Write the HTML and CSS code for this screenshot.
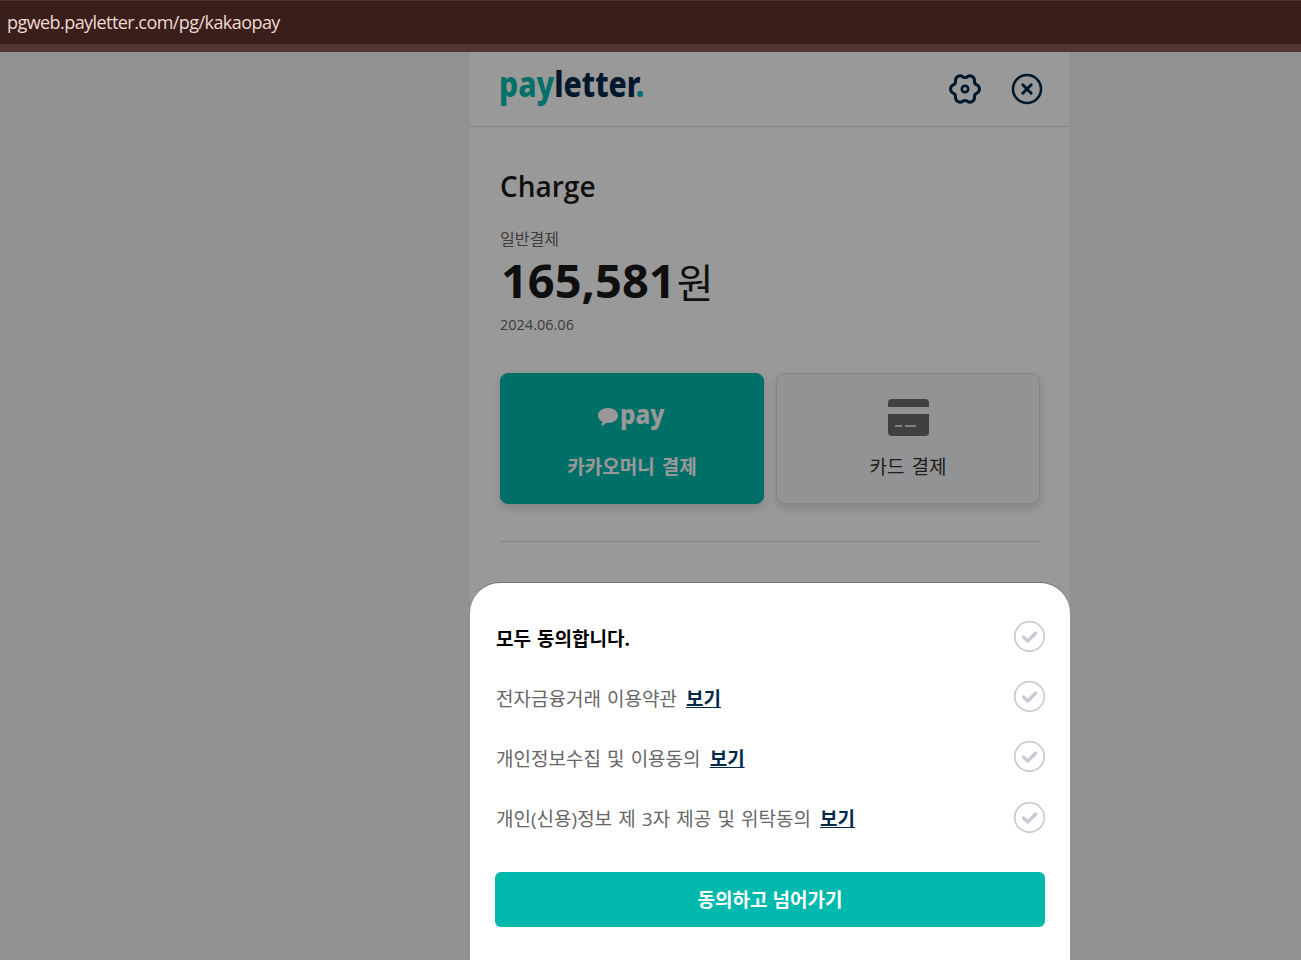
FILE: index.html
```html
<!doctype html>
<html lang="ko">
<head>
	<meta charset="UTF-8">
	<title>payletter</title>
	<link rel="stylesheet" href="styles.css">
</head>
<body>
	<div class="urlbar">
		<div class="urltext">pgweb.payletter.com/pg/kakaopay</div>
	</div>
	<div class="page">
		<div class="panel">
			<div class="header">
				<div class="logo"><span class="logo-pay">pay</span>letter<span class="logo-pay">.</span></div>
				<div class="header-icons">
					<svg class="icon-gear" width="34" height="34" viewBox="0 0 34 34" fill="none" stroke="#00294a" stroke-width="3" stroke-linejoin="round">
						<path d="M28.81 12.9A4.5 4.5 0 0 1 28.81 21.1A4 4 0 0 0 26.46 25.18A4.5 4.5 0 0 1 19.36 29.28A4 4 0 0 0 14.64 29.28A4.5 4.5 0 0 1 7.54 25.18A4 4 0 0 0 5.19 21.1A4.5 4.5 0 0 1 5.19 12.9A4 4 0 0 0 7.54 8.82A4.5 4.5 0 0 1 14.64 4.72A4 4 0 0 0 19.36 4.72A4.5 4.5 0 0 1 26.46 8.82A4 4 0 0 0 28.81 12.9z"/>
						<circle cx="17" cy="17" r="3.200" stroke-width="2.600"/>
					</svg>
					<svg class="icon-close" width="32" height="32" viewBox="0 0 32 32" fill="none" stroke="#00294a" stroke-width="2.600" stroke-linecap="round">
						<circle cx="16" cy="16" r="14"/>
						<path stroke-width="3" d="M11.800 11.800l8.400 8.400M20.200 11.800l-8.400 8.400"/>
					</svg>
				</div>
			</div>
			<div class="content">
				<h1 class="title">Charge</h1>
				<div class="label">일반결제</div>
				<div class="amount"><span class="amount-num">165,581</span><span class="amount-unit">원</span></div>
				<div class="date">2024.06.06</div>
				<div class="methods">
					<div class="method method-on">
						<div class="kakao">
							<svg class="kakao-bubble" width="22" height="21" viewBox="0 0 22 21"><path fill="#fff" d="M11 1C5.400 1 1 4.300 1 8.500c0 2.700 1.800 5 4.500 6.300l-1.100 4.700 5-3.600c.5.100 1.100.1 1.600.1 5.600 0 10-3.300 10-7.500S16.600 1 11 1z"/></svg>
							<span class="kakao-pay">pay</span>
						</div>
						<div class="method-name">카카오머니 결제</div>
					</div>
					<div class="method">
						<svg class="card-icon" width="41" height="37" viewBox="0 0 41 37">
							<path fill="#6b6b6b" d="M4 0h33a4 4 0 0 1 4 4v4H0V4a4 4 0 0 1 4-4z"/>
							<path fill="#6b6b6b" d="M0 15h41v18a4 4 0 0 1-4 4H4a4 4 0 0 1-4-4z"/>
							<path fill="#d6d6d6" d="M7 26h7v2H7zM17 26h11v2H17z"/>
						</svg>
						<div class="method-name method-name-card">카드 결제</div>
					</div>
				</div>
				<div class="divider"></div>
			</div>
		</div>
	</div>
	<div class="dim"></div>
	<div class="sheet">
		<div class="row">
			<div class="row-text row-all">모두 동의합니다.</div>
			<svg class="check" width="32" height="32" viewBox="-0.500 -0.500 32 32" fill="none" stroke="#c8cbd2"><circle cx="16" cy="16" r="14.800" stroke-width="1.700"/><path stroke-width="3.400" stroke-linecap="round" stroke-linejoin="round" d="M10 16.500l4.300 4 7.900-8"/></svg>
		</div>
		<div class="row">
			<div class="row-text">전자금융거래 이용약관 <a class="row-link">보기</a></div>
			<svg class="check" width="32" height="32" viewBox="-0.500 -0.500 32 32" fill="none" stroke="#c8cbd2"><circle cx="16" cy="16" r="14.800" stroke-width="1.700"/><path stroke-width="3.400" stroke-linecap="round" stroke-linejoin="round" d="M10 16.500l4.300 4 7.900-8"/></svg>
		</div>
		<div class="row">
			<div class="row-text">개인정보수집 및 이용동의 <a class="row-link">보기</a></div>
			<svg class="check" width="32" height="32" viewBox="-0.500 -0.500 32 32" fill="none" stroke="#c8cbd2"><circle cx="16" cy="16" r="14.800" stroke-width="1.700"/><path stroke-width="3.400" stroke-linecap="round" stroke-linejoin="round" d="M10 16.500l4.300 4 7.900-8"/></svg>
		</div>
		<div class="row row-last">
			<div class="row-text">개인(신용)정보 제 3자 제공 및 위탁동의 <a class="row-link">보기</a></div>
			<svg class="check" width="32" height="32" viewBox="-0.500 -0.500 32 32" fill="none" stroke="#c8cbd2"><circle cx="16" cy="16" r="14.800" stroke-width="1.700"/><path stroke-width="3.400" stroke-linecap="round" stroke-linejoin="round" d="M10 16.500l4.300 4 7.900-8"/></svg>
		</div>
		<div class="agree-btn">동의하고 넘어가기</div>
	</div>
</body>
</html>
```

FILE: styles.css
```css
html,body{
	margin: 0;
	height: 960px;
	overflow: hidden;
}
body{
	background: #f2f2f2;
	font-family: "Open Sans","Noto Sans CJK KR",sans-serif;
	position: relative;
}
.urlbar{
	height: 43px;
	background: #3a1e1c;
	border-top: 1px solid #4e3230;
	border-bottom: 8px solid #533534;
	position: relative;
	z-index: 20;
}
.urltext{
	padding-left: 7px;
	line-height: 43px;
	font-size: 18px;
	color: #f0d9cf;
	letter-spacing: -0.56px;
}
.page{
	display: flex;
	padding-left: 470px;
}
.panel{
	width: 600px;
	height: 908px;
	background: #fff;
}
.header{
	height: 74px;
	border-bottom: 1px solid #ddd;
	padding: 0 27px 0 29px;
	display: flex;
	justify-content: space-between;
	align-items: center;
}
.logo{
	font-family: "Noto Sans",sans-serif;
	font-weight: 800;
	font-size: 36px;
	line-height: 40px;
	color: #00294a;
	margin-top: -10px;
	transform: scaleX(.835);
	transform-origin: left center;
}
.logo-pay{
	color: #00bbad;
}
.header-icons{
	display: flex;
	align-items: center;
	gap: 29px;
}
.content{
	padding: 0 30px;
}
.title{
	margin: 41px 0 0;
	font-size: 28px;
	line-height: 36px;
	font-weight: 600;
	color: #1a1a1a;
}
.label{
	margin-top: 24px;
	font-size: 16px;
	line-height: 22px;
	color: #666;
}
.amount{
	display: flex;
	align-items: baseline;
	margin-top: 5px;
	color: #1a1a1a;
	line-height: 50px;
}
.amount-num{
	font-size: 47px;
	font-weight: 700;
	padding-left: 1px;
}
.amount-unit{
	font-size: 40px;
	margin-left: 1px;
}
.date{
	margin-top: 7px;
	font-size: 14.500px;
	line-height: 20px;
	color: #666;
}
.methods{
	display: flex;
	gap: 12px;
	margin-top: 38px;
}
.method{
	flex: 1;
	height: 131px;
	box-sizing: border-box;
	border: 1px solid #dcdde1;
	border-radius: 8px;
	background: #f4f5f7;
	box-shadow: 0 4px 8px rgba(0,0,0,.15);
	display: flex;
	flex-direction: column;
	align-items: center;
	padding-top: 25px;
}
.method-on{
	background: #00b9ad;
	border-color: #00b9ad;
}
.kakao{
	display: flex;
	align-items: center;
	gap: 1px;
	height: 36px;
	color: #fff;
	margin: -2px 0 0 -2px;
}
.kakao-bubble{
	margin-top: 4px;
}
.kakao-pay{
	font-family: "Noto Sans",sans-serif;
	font-weight: 800;
	font-size: 26px;
	line-height: 30px;
	display: inline-block;
	width: 45px;
	margin-top: -3px;
	transform: scaleX(.93);
	transform-origin: left center;
}
.method-name{
	margin-top: 21px;
	font-size: 19px;
	line-height: 26px;
	font-weight: 700;
	color: #fff;
	word-spacing: 2px;
}
.method-name-card{
	margin-top: 18px;
	font-weight: 400;
	color: #333;
}
.divider{
	margin-top: 37px;
	height: 1px;
	background: #ddd;
}
.dim{
	position: absolute;
	left: 0;
	top: 0;
	right: 0;
	bottom: 0;
	background: rgba(0,0,0,.4);
	z-index: 10;
}
.sheet{
	position: absolute;
	left: 470px;
	top: 583px;
	width: 600px;
	height: 377px;
	box-sizing: border-box;
	background: #fff;
	border-radius: 30px 30px 0 0;
	box-shadow: 0 -1px 0 #777;
	padding: 23px 25px 0;
	z-index: 15;
}
.row{
	height: 60px;
	display: flex;
	justify-content: space-between;
	align-items: center;
}
.row-last{
	padding-top: 1px;
}
.row-text{
	font-size: 19px;
	color: #666;
	word-spacing: 1.200px;
	padding: 4px 0 0 1px;
}
.row-last .row-text{
	padding-top: 2px;
}
.row-all{
	font-weight: 700;
	color: #000;
}
.row-link{
	font-weight: 700;
	color: #00294a;
	text-decoration: underline;
	margin-left: 3px;
}
.agree-btn{
	margin-top: 25px;
	height: 55px;
	line-height: 56px;
	border-radius: 6px;
	background: #00b9ad;
	color: #fff;
	font-size: 19px;
	font-weight: 700;
	text-align: center;
}
```
